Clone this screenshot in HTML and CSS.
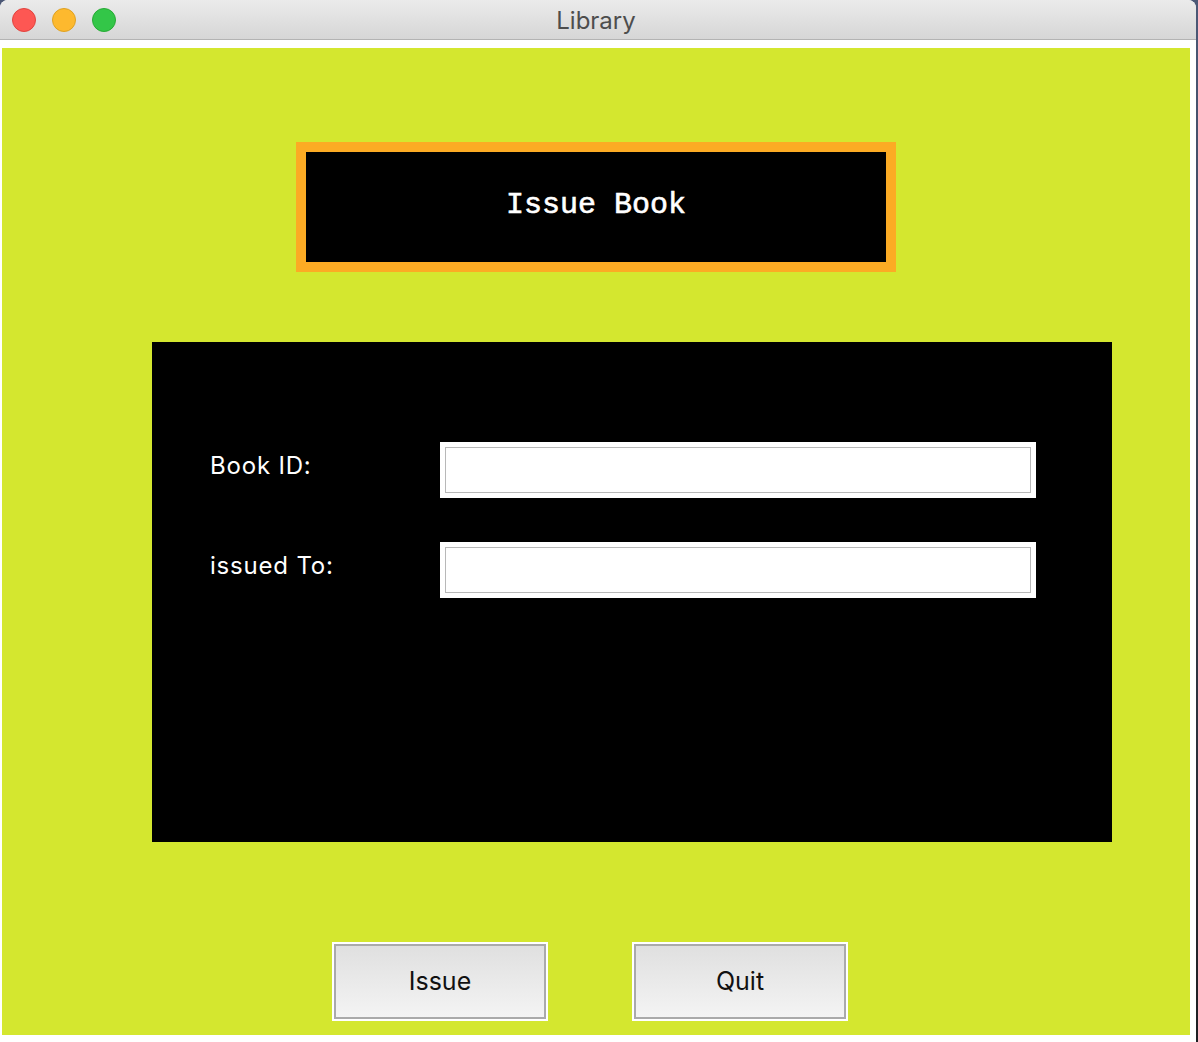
FILE: index.html
```html
<!DOCTYPE html>
<html>
<head>
<meta charset="utf-8">
<title>Library</title>
<link rel="stylesheet" href="styles.css">
</head>
<body>
<div class="window">
  <div class="titlebar">
    <div class="lights">
      <span class="light red"></span>
      <span class="light yellow"></span>
      <span class="light green"></span>
    </div>
    <div class="title">Library</div>
  </div>
  <div class="content">
    <div class="canvas">
      <div class="heading"><span>Issue Book</span></div>
      <div class="panel">
        <div class="form">
          <label class="label">Book ID:</label>
          <div class="entry"><div class="entry-inner"></div></div>
          <label class="label">issued To:</label>
          <div class="entry"><div class="entry-inner"></div></div>
        </div>
      </div>
      <div class="buttons">
        <button class="btn">Issue</button>
        <button class="btn">Quit</button>
      </div>
    </div>
  </div>
</div>
</body>
</html>
```

FILE: styles.css
```css
html, body {
  margin: 0;
  padding: 0;
}
body {
  width: 1198px;
  height: 1042px;
  background: linear-gradient(#4b5876, #1e1e22);
  overflow: hidden;
  font-family: "Inter", "Liberation Sans", sans-serif;
}
.window {
  width: 1196px;
  height: 1042px;
  background: #ffffff;
  border-radius: 8px 8px 0 0;
  overflow: hidden;
  display: flex;
  flex-direction: column;
}
.titlebar {
  height: 40px;
  flex: 0 0 40px;
  box-sizing: border-box;
  background: linear-gradient(#ebebeb, #d6d6d6);
  border-bottom: 1px solid #b3b3b3;
  position: relative;
  display: flex;
  align-items: center;
  justify-content: center;
}
.lights {
  position: absolute;
  left: 12px;
  top: 8px;
  display: flex;
  gap: 16px;
}
.light {
  width: 24px;
  height: 24px;
  border-radius: 50%;
  box-sizing: border-box;
}
.red { background: #fd5753; border: 1px solid #e0443e; }
.yellow { background: #fdb92e; border: 1px solid #dea123; }
.green { background: #33c648; border: 1px solid #27aa35; }
.title {
  font-size: 24px;
  color: #4d4d4d;
  font-family: "Inter", "Liberation Sans", sans-serif;
  margin-top: 1px;
  margin-left: -4px;
}
.content {
  flex: 1;
  padding: 8px 6px 7px 2px;
  box-sizing: border-box;
  display: flex;
}
.canvas {
  flex: 1;
  background: #d4e72f;
  display: flex;
  flex-direction: column;
}
.heading {
  margin: 94px auto 0;
  width: 600px;
  height: 130px;
  box-sizing: border-box;
  border: 10px solid #fcab24;
  background: #000;
  display: flex;
  align-items: center;
  justify-content: center;
}
.heading span {
  color: #ffffff;
  font-family: "Liberation Mono", "Courier New", monospace;
  font-weight: normal;
  font-size: 30px;
  margin-top: -4px;
  -webkit-text-stroke: 0.6px #ffffff;
}
.panel {
  margin: 70px 0 0 150px;
  width: 960px;
  height: 500px;
  background: #000;
  box-sizing: border-box;
  padding: 100px 0 0 58px;
}
.form {
  display: grid;
  grid-template-columns: 230px 596px;
  grid-auto-rows: 56px;
  row-gap: 44px;
}
.label {
  color: #ffffff;
  font-size: 24px;
  line-height: 30px;
  margin-top: 9px;
  letter-spacing: 0.8px;
}
.entry {
  background: #ffffff;
  padding: 5px;
  box-sizing: border-box;
  height: 56px;
}
.entry-inner {
  height: 100%;
  box-sizing: border-box;
  border: 1px solid #b8b8b8;
  background: #fff;
}
.buttons {
  margin-top: 100px;
  padding-left: 330px;
  display: flex;
  gap: 84px;
}
.btn {
  width: 216px;
  height: 79px;
  box-sizing: border-box;
  border: 2px solid #ffffff;
  box-shadow: inset 0 0 0 2px #aaaaaa;
  background: linear-gradient(#dfdfdf, #f4f4f4);
  font-family: "Inter", "Liberation Sans", sans-serif;
  font-size: 25px;
  color: #111;
  padding: 0 0 2px 0;
  margin: 0;
}
```
